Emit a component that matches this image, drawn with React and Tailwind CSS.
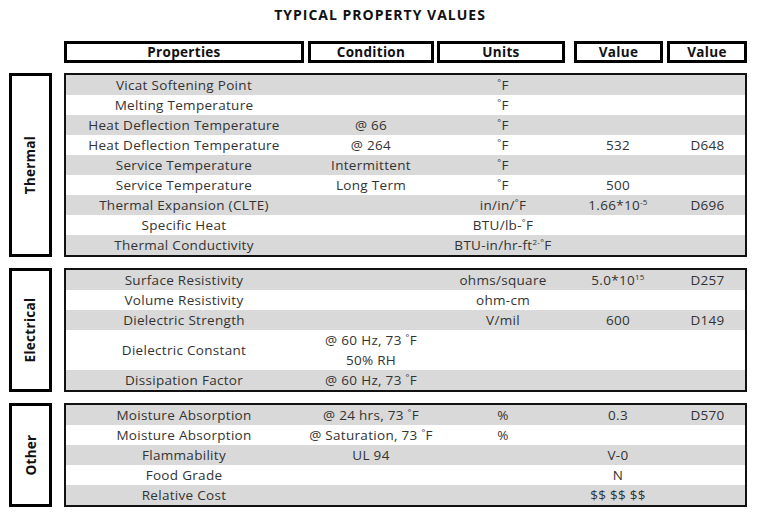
const font = { fontFamily: '"Open Sans", "Liberation Sans", sans-serif' }

const cols = 'grid grid-cols-[236px_138px_126px_104px_1fr] items-center text-center'

function Deg() {
  return <span className="align-[4px] text-[9px] leading-none">°</span>
}

function Exp({ children }) {
  return <span className="align-[5px] text-[8px] leading-none">{children}</span>
}

const thermal = [
  ['Vicat Softening Point', '', <><Deg />F</>, '', ''],
  ['Melting Temperature', '', <><Deg />F</>, '', ''],
  ['Heat Deflection Temperature', '@ 66', <><Deg />F</>, '', ''],
  ['Heat Deflection Temperature', '@ 264', <><Deg />F</>, '532', 'D648'],
  ['Service Temperature', 'Intermittent', <><Deg />F</>, '', ''],
  ['Service Temperature', 'Long Term', <><Deg />F</>, '500', ''],
  ['Thermal Expansion (CLTE)', '', <>in/in/<Deg />F</>, <>1.66*10<Exp>-5</Exp></>, 'D696'],
  ['Specific Heat', '', <>BTU/lb-<Deg />F</>, '', ''],
  ['Thermal Conductivity', '', <>BTU-in/hr-ft<Exp>2-</Exp><Deg />F</>, '', ''],
]

const electrical = [
  ['Surface Resistivity', '', 'ohms/square', <>5.0*10<Exp>15</Exp></>, 'D257'],
  ['Volume Resistivity', '', 'ohm-cm', '', ''],
  ['Dielectric Strength', '', 'V/mil', '600', 'D149'],
  [
    'Dielectric Constant',
    <>
      <div>@ 60 Hz, 73 <Deg />F</div>
      <div>50% RH</div>
    </>,
    '',
    '',
    '',
    true,
  ],
  ['Dissipation Factor', <>@ 60 Hz, 73 <Deg />F</>, '', '', ''],
]

const other = [
  ['Moisture Absorption', <>@ 24 hrs, 73 <Deg />F</>, '%', '0.3', 'D570'],
  ['Moisture Absorption', <>@ Saturation, 73 <Deg />F</>, '%', '', ''],
  ['Flammability', 'UL 94', '', 'V-0', ''],
  ['Food Grade', '', '', 'N', ''],
  ['Relative Cost', '', '', '$$ $$ $$', ''],
]

function Row({ row, i }) {
  const [prop, cond, unit, val, val2, tall] = row
  return (
    <div
      className={`${cols} ${tall ? 'h-[40px]' : 'h-[20px]'} ${
        i % 2 === 0 ? 'bg-[#d9d9d9]' : 'bg-white'
      }`}
    >
      <div>{prop}</div>
      <div>{cond}</div>
      <div>{unit}</div>
      <div>{val}</div>
      <div>{val2}</div>
    </div>
  )
}

function Section({ label, rows }) {
  return (
    <div className="flex gap-[12px] pl-[9px]">
      <div className="w-[43px] border-[3px] border-black flex items-center justify-center">
        <span className="-rotate-90 whitespace-nowrap font-bold text-[13.5px] text-[#111]">
          {label}
        </span>
      </div>
      <div className="w-[683px] border-2 border-[#111]">
        {rows.map((row, i) => (
          <Row key={i} row={row} i={i} />
        ))}
      </div>
    </div>
  )
}

function HeadBox({ children, className }) {
  return (
    <div
      className={`h-[22px] border-[3px] border-black flex items-center justify-center ${className}`}
    >
      {children}
    </div>
  )
}

export default function App() {
  return (
    <div
      className="w-[760px] h-[517px] bg-white text-[13.5px] tracking-[0.3px] text-[#333] leading-[20px] overflow-hidden"
      style={font}
    >
      <div className="h-[41px] pt-[6px] text-center font-bold text-[14px] tracking-[1px] text-[#111] leading-[18px]">
        TYPICAL PROPERTY VALUES
      </div>
      <div className="flex pl-[64px] font-bold text-[13.5px] text-[#111]">
        <HeadBox className="w-[240px]">Properties</HeadBox>
        <HeadBox className="ml-[4px] w-[126px]">Condition</HeadBox>
        <HeadBox className="ml-[3px] w-[128px]">Units</HeadBox>
        <HeadBox className="ml-[9px] w-[89px]">Value</HeadBox>
        <HeadBox className="ml-[4px] w-[80px]">Value</HeadBox>
      </div>
      <div className="flex flex-col gap-[11px] mt-[10px]">
        <Section label="Thermal" rows={thermal} />
        <Section label="Electrical" rows={electrical} />
        <Section label="Other" rows={other} />
      </div>
    </div>
  )
}
